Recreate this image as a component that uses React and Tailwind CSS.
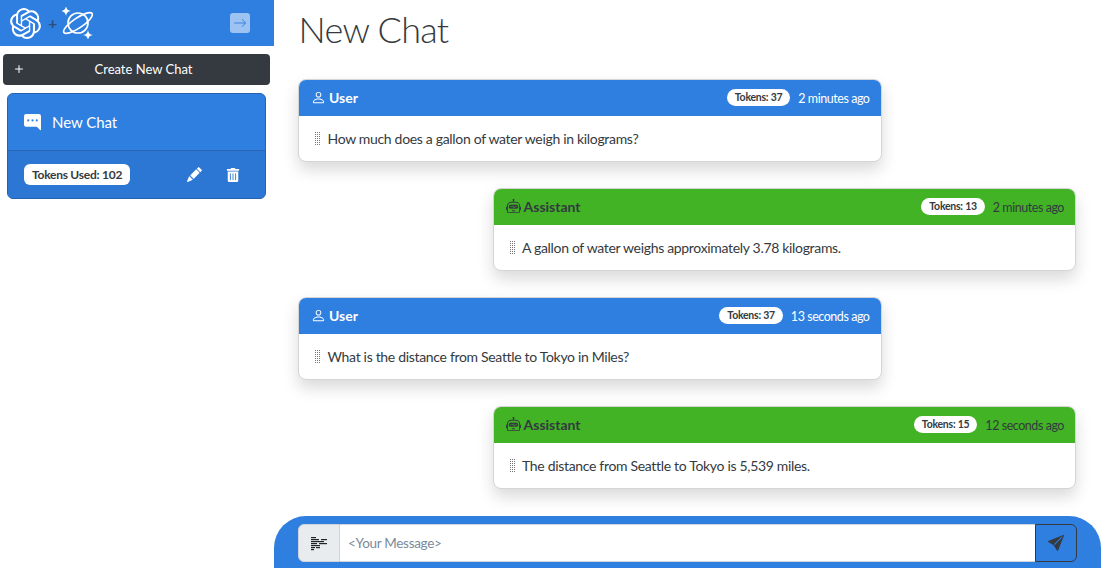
import React from "react";
import { BsPerson, BsRobot, BsPencilFill, BsChatRightDotsFill, BsArrowRight, BsSendFill, BsPlus } from "react-icons/bs";
import { FaTrashAlt } from "react-icons/fa";
import { SiOpenai } from "react-icons/si";

function Planet() {
  return (
    <svg width="32" height="32" viewBox="0 0 32 32" fill="none" stroke="white" strokeWidth="1.7">
      <circle cx="16" cy="16" r="10" />
      <ellipse cx="16" cy="16" rx="17" ry="5" transform="rotate(-34 16 16)" />
      <path d="M4 -1 C4.6 2.2 5.6 3.4 9 4 C5.6 4.6 4.6 5.8 4 9 C3.4 5.8 2.4 4.6 -1 4 C2.4 3.4 3.4 2.2 4 -1Z" fill="white" stroke="none" />
      <path d="M26 23 C26.6 26.2 27.6 27.4 31 28 C27.6 28.6 26.6 29.8 26 33 C25.4 29.8 24.4 28.6 21 28 C24.4 27.4 25.4 26.2 26 23Z" fill="white" stroke="none" />
    </svg>
  );
}

function Grip() {
  return (
    <svg width="5" height="13" viewBox="0 0 5 13" className="shrink-0" fill="#777">
      {[0, 2, 4, 6, 8, 10, 12].flatMap((y) => [0, 2, 4].map((x) => <rect key={x + "-" + y} x={x} y={y} width="1" height="1" />))}
    </svg>
  );
}

function LinesIcon() {
  const rows = [
    [0, 5],
    [0, 8, 10, 16],
    [0, 13],
    [0, 6, 8, 16],
    [0, 9],
    [0, 4, 5, 9],
    [0, 3],
  ];
  return (
    <svg width="16" height="15" viewBox="0 0 16 15" fill="#212529">
      {rows.flatMap((r, i) => {
        const out = [];
        for (let j = 0; j < r.length; j += 2) out.push(<rect key={i + "-" + j} x={r[j]} y={i * 2 + 1} width={r[j + 1] - r[j]} height="1.2" />);
        return out;
      })}
    </svg>
  );
}

function Message({ role, tokens, time, text }) {
  const user = role === "User";
  return (
    <div className={user ? "w-[583.5px] rounded-lg border border-[#d5d5d5] bg-white shadow-[0_8px_16px_rgba(0,0,0,0.15)] overflow-hidden" : "w-[583.5px] self-end rounded-lg border border-[#d5d5d5] bg-white shadow-[0_8px_16px_rgba(0,0,0,0.15)] overflow-hidden"}>
      <div className={user ? "flex h-[36px] items-center bg-[#2e7fe0] pl-3 pr-[11px] text-white" : "flex h-[36px] items-center bg-[#41b324] pl-3 pr-[11px] text-[#343a40]"}>
        {user ? <BsPerson size={15} className="mb-[2px]" /> : <BsRobot size={15} className="mb-[2px]" />}
        <span className="mb-[2px] ml-[3px] text-[14px] font-bold">{role}</span>
        <span className="mb-[1px] ml-auto rounded-full bg-white px-2 py-[2px] text-[10.5px] leading-[13px] font-bold tracking-[-0.25px] text-[#343a40]">Tokens: {tokens}</span>
        <span className="mt-[2px] ml-2 text-[12.5px] tracking-[-0.45px]">{time}</span>
      </div>
      <div className="flex h-[45px] items-center gap-[7.5px] px-4 text-[14px] tracking-[-0.32px] text-[#343a40]">
        <Grip />
        <span>{text}</span>
      </div>
    </div>
  );
}

export default function App() {
  return (
    <div className="flex h-[568px] w-[1101px] overflow-hidden bg-white font-['Lato',sans-serif]">
      <aside className="flex w-[274px] shrink-0 flex-col">
        <div className="flex h-[46px] items-center bg-[#2e7fe0] pl-[10px] pr-[24px]">
          <SiOpenai size={31} color="white" />
          <span className="ml-[7px] mr-[5px] text-[16px] font-bold text-[#2a4f7f]">+</span>
          <Planet />
          <div className="ml-auto flex h-[20px] w-[20px] items-center justify-center rounded-[3px] bg-[#9dc3f2] text-[#3f86e0]">
            <BsArrowRight size={14} />
          </div>
        </div>
        <button className="relative mx-[3px] mt-2 flex h-[31px] w-[267px] items-center justify-center rounded bg-[#343a40] pl-[14px] text-[13px] text-white">
          <BsPlus size={16} className="absolute left-[8px] top-[7px]" />
          Create New Chat
        </button>
        <div className="mx-[7px] mt-2 h-[106px] w-[259px] overflow-hidden rounded-md border border-[#2563b0] bg-[#2e7fe0] text-white">
          <div className="flex h-[57px] items-center border-b border-[#2a66b3] px-4">
            <BsChatRightDotsFill size={17} />
            <span className="ml-[11px] text-[15px] tracking-[-0.05px]">New Chat</span>
          </div>
          <div className="flex h-[47px] items-center bg-[#2d77d4] pl-4 pr-[25px]">
            <span className="rounded-md bg-white px-2 py-[3px] text-[12px] leading-[15px] font-bold tracking-[-0.25px] text-[#343a40]">Tokens Used: 102</span>
            <BsPencilFill size={15} className="ml-auto" />
            <FaTrashAlt size={14} className="ml-6" />
          </div>
        </div>
      </aside>
      <main className="relative flex min-w-0 flex-1 flex-col">
        <h1 className="mt-[6px] ml-[24.5px] text-[36px] leading-[46px] font-light tracking-[-0.7px] text-[#343a40]">New Chat</h1>
        <div className="mt-[27px] flex flex-col gap-[26px] pl-[24px] pr-[25px]">
          <Message role="User" tokens="37" time="2 minutes ago" text="How much does a gallon of water weigh in kilograms?" />
          <Message role="Assistant" tokens="13" time="2 minutes ago" text="A gallon of water weighs approximately 3.78 kilograms." />
          <Message role="User" tokens="37" time="13 seconds ago" text="What is the distance from Seattle to Tokyo in Miles?" />
          <Message role="Assistant" tokens="15" time="12 seconds ago" text="The distance from Seattle to Tokyo is 5,539 miles." />
        </div>
        <div className="mt-auto flex h-[52px] items-start rounded-t-[32px] bg-[#2e7fe0] pl-[24px] pr-[24px] pt-[8px]">
          <div className="flex h-[38px] w-[42px] items-center justify-center rounded-l-md border border-[#ced4da] bg-[#e9ecef] text-[#212529]">
            <LinesIcon />
          </div>
          <div className="flex h-[38px] flex-1 items-center border-y border-[#ced4da] bg-white px-2 text-[13.5px] tracking-[-0.3px] text-[#7b8a9a]">&lt;Your Message&gt;</div>
          <div className="flex h-[38px] w-[42px] items-center justify-center rounded-r-md border border-[#343a40] text-[#343a40]">
            <BsSendFill size={16} />
          </div>
        </div>
      </main>
    </div>
  );
}
